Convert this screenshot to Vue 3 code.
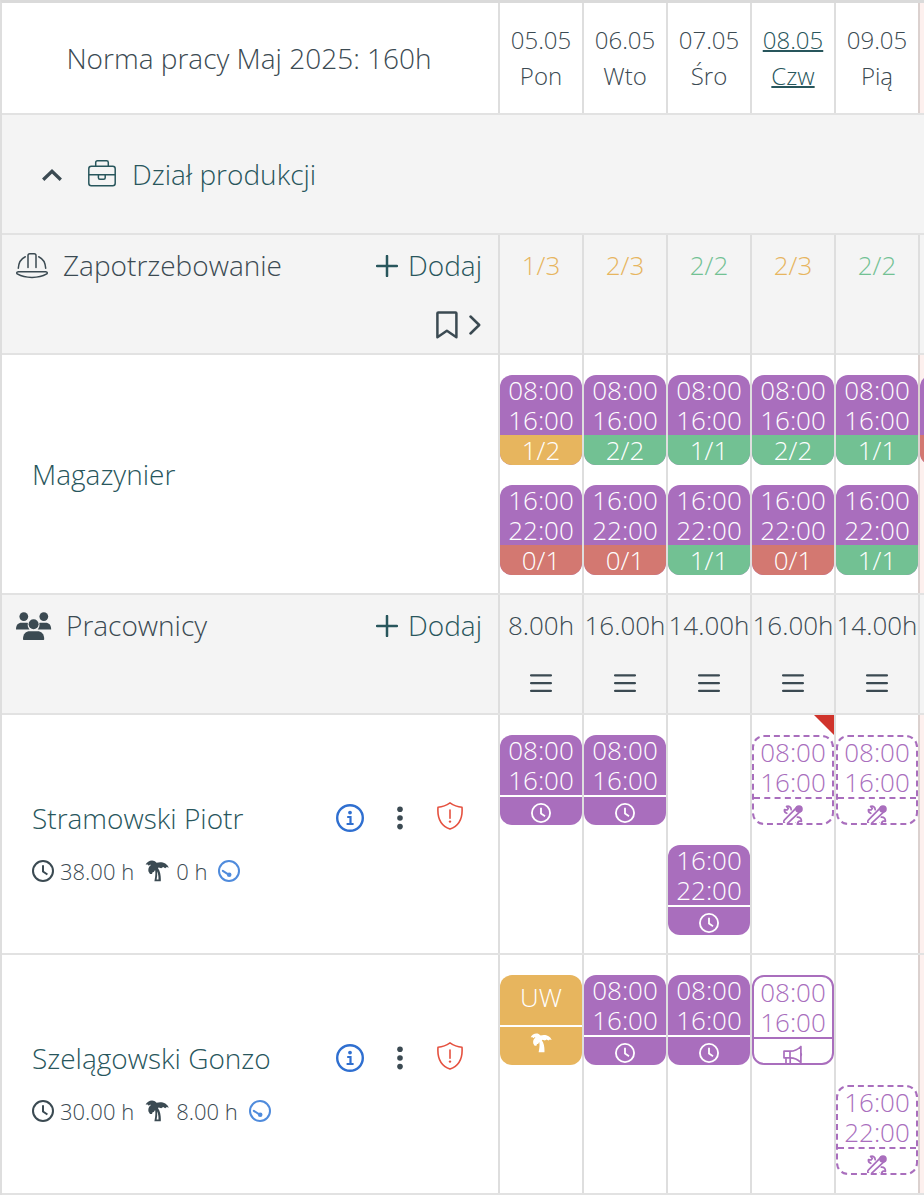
<template>
  <div class="schedule">
    <svg class="sprite" aria-hidden="true">
      <symbol id="i-clock" viewBox="0 0 22 22">
        <circle cx="11" cy="11" r="10" fill="none" stroke="currentColor" stroke-width="2" />
        <path d="M11 5.2v6.3l4.4 3" fill="none" stroke="currentColor" stroke-width="2" />
      </symbol>
      <symbol id="i-palm" viewBox="0 0 24 22">
        <path
          d="M.6 4.600C2.400 1 8-1.600 11.600 2.800c4-1.600 10.400-.4 12.200 5l-2-.7-1.600 1.100-2-1.100-2 1.200-2.400-.9-.9.500c2.600 3.500 3.100 8.200 2.900 13.300H9.400c.9-4.600 1.300-8.200.7-11.200L8.800 12l-1.200.2-.6 1.900-2-.1-1.400-2.200c-.8-2.800.2-5.400 2.200-6.600L5.200 4.400 3.900 5.800 2.600 4.600z"
          fill="currentColor"
        />
        <path class="palm-trunk" d="M12.100 11.200c1.200 2.600 1.500 5.200 1.400 8.300h-1.900c.6-2.800.8-5.500.5-8.300z" />
      </symbol>
      <symbol id="i-gauge" viewBox="0 0 22 22">
        <circle cx="11" cy="11" r="10" fill="none" stroke="currentColor" stroke-width="2" />
        <path d="M4.800 10.800L11 14.800" fill="none" stroke="currentColor" stroke-width="2" stroke-linecap="round" />
        <circle cx="11.200" cy="14.800" r="2.300" fill="currentColor" />
      </symbol>
      <symbol id="i-tools" viewBox="0 0 20 20">
        <g fill="none" stroke="currentColor" stroke-width="1.700" stroke-linecap="round" stroke-linejoin="round">
          <path d="M3.600 1.500c2.200-.9 4.600.6 4.600 3.200M3.600 1.500l1.700 2-1.200 1.500-2.600-.4c-.3 1.700.7 3.200 2.300 3.700" />
          <path d="M14.300 12.200c2.600-.3 4.400 1.500 4.100 4.200l-2.300-.4-1.300 1.400 1.600 2c-1.500.5-3 .1-3.900-1" />
          <path d="M13.800 2.300L1.300 15.200c-1.700 1.900.9 5 3.200 3.200L17.600 6.200" />
        </g>
        <circle cx="16" cy="4" r="3.800" fill="currentColor" />
      </symbol>
      <symbol id="i-horn" viewBox="0 0 20 20">
        <g fill="none" stroke="currentColor" stroke-width="1.700" stroke-linejoin="round">
          <path d="M1 6.200h6.200c4 0 7.700-1.700 10.700-4.700v16c-3-3-6.700-4.700-10.700-4.700H1z" />
          <path d="M7 6.200v6.600M3 12.800V20h4.200v-7" />
        </g>
        <path d="M17.600 7.500c2 .6 2 3.600 0 4.200z" fill="currentColor" />
      </symbol>
    </svg>

    <div class="row row-dates">
      <div class="lead lead-norm">Norma pracy Maj 2025: 160h</div>
      <div v-for="d in days" :key="d.date" class="cell cell-date">
        <span :class="{ today: d.today }">{{ d.date }}</span>
        <span :class="{ today: d.today }">{{ d.name }}</span>
      </div>
      <div class="weekend"></div>
    </div>

    <div class="department">
      <svg class="caret" width="20" height="12" viewBox="0 0 20 12">
        <path d="M1.200 10.800L10 2.400l8.800 8.400" fill="none" stroke="currentColor" stroke-width="3.300" />
      </svg>
      <svg class="briefcase" width="28" height="28" viewBox="0 0 28 28">
        <g fill="none" stroke="currentColor" stroke-width="1.500">
          <rect x=".8" y="6.300" width="26.400" height="19.400" rx="2.500" />
          <path d="M7.700 6V2.500c0-1 .7-1.700 1.700-1.700h9.200c1 0 1.700.7 1.700 1.700V6M.8 14.800h26.400M10.400 14.800v2.900c0 .9.600 1.500 1.500 1.500h3.800c.9 0 1.500-.6 1.500-1.500v-2.900" />
        </g>
      </svg>
      <span>Dział produkcji</span>
    </div>

    <div class="row row-head">
      <div class="lead lead-head">
        <div class="head-line">
          <svg class="helmet" width="32" height="26" viewBox="0 0 32 26">
            <g fill="none" stroke="currentColor" stroke-width="1.500" stroke-linecap="round" stroke-linejoin="round">
              <path d="M12 14.500V2.600C12 1.500 12.700.8 13.800.8h4.400c1.100 0 1.800.7 1.800 1.800v11.900" />
              <path d="M9.300 3.800C5 5.700 2.700 10 2.300 15.300M22.700 3.800c4.300 1.900 6.600 6.200 7 11.500" />
              <path d="M2.300 18.700h27.400c1.900 0 2 1.800.6 2.500-7.200 4.300-21.400 4.300-28.600 0-1.400-.7-1.300-2.500.6-2.500z" />
            </g>
          </svg>
          <span class="head-title">Zapotrzebowanie</span>
          <button class="add">
            <svg width="22" height="22" viewBox="0 0 22 22"><path d="M11 1v20M1 11h20" /></svg>
            Dodaj
          </button>
        </div>
        <div class="head-tools">
          <svg width="22" height="28" viewBox="0 0 22 28">
            <path d="M1.400 26.300V2.300c0-.5.400-.9.900-.9h17.200c.5 0 .9.400.9.900v24l-9.500-6.500z" fill="none" stroke="currentColor" stroke-width="2.500" stroke-linejoin="round" />
          </svg>
          <svg width="12" height="20" viewBox="0 0 12 20">
            <path d="M1.500 1.500L10.200 10l-8.700 8.500" fill="none" stroke="currentColor" stroke-width="2.500" stroke-linecap="round" stroke-linejoin="round" />
          </svg>
        </div>
      </div>
      <div v-for="(n, i) in needs" :key="i" class="cell cell-sum" :class="n.state">{{ n.text }}</div>
      <div></div>
    </div>

    <div class="row row-body">
      <div class="lead lead-role">Magazynier</div>
      <div v-for="(col, i) in demand" :key="i" class="cell cell-shifts">
        <div v-for="s in col" :key="s.from" class="shift">
          <div class="time">{{ s.from }}</div>
          <div class="time">{{ s.to }}</div>
          <div class="count" :class="s.state">{{ s.count }}</div>
        </div>
      </div>
      <div class="weekend cell-shifts">
        <div class="shift">
          <div class="time"></div>
          <div class="time"></div>
          <div class="count bad"></div>
        </div>
      </div>
    </div>

    <div class="row row-head">
      <div class="lead lead-head">
        <div class="head-line">
          <svg class="group" width="36" height="28" viewBox="0 0 36 28">
            <g fill="currentColor">
              <circle cx="7.800" cy="4.600" r="4.400" />
              <circle cx="27.800" cy="4.600" r="4.400" />
              <circle cx="17.600" cy="12.300" r="5" />
              <path d="M0 17.400c0-4.600 2.300-6.600 5.400-6.600h5.200c.5 0 .9.100 1.300.200-.6 2.500.1 4.800 1.600 6.400zM35.200 17.400c0-4.600-2.300-6.600-5.400-6.600h-5.200c-.5 0-.9.100-1.300.200.600 2.500-.1 4.800-1.600 6.400z" />
              <path d="M7 27c0-5.200 2.900-7.800 6.900-7.800h7.400c4 0 6.900 2.600 6.900 7.800 0 .6-.4 1-1 1H8c-.6 0-1-.4-1-1z" />
            </g>
          </svg>
          <span class="head-title people">Pracownicy</span>
          <button class="add">
            <svg width="22" height="22" viewBox="0 0 22 22"><path d="M11 1v20M1 11h20" /></svg>
            Dodaj
          </button>
        </div>
      </div>
      <div v-for="(h, i) in hours" :key="i" class="cell cell-hours">
        <span>{{ h }}</span>
        <svg width="22" height="20" viewBox="0 0 22 20">
          <path d="M1.100 2.300h19.800M1.100 10.100h19.800M1.100 17.900h19.800" fill="none" stroke="currentColor" stroke-width="2.300" stroke-linecap="round" />
        </svg>
      </div>
      <div></div>
    </div>

    <div v-for="w in workers" :key="w.name" class="row row-body">
      <div class="lead lead-worker">
        <div class="worker-line">
          <span class="worker-name">{{ w.name }}</span>
          <svg class="info" width="28" height="28" viewBox="0 0 28 28">
            <circle cx="14" cy="14" r="12.800" fill="none" stroke="currentColor" stroke-width="2.400" />
            <circle cx="14" cy="8.600" r="1.900" fill="currentColor" />
            <path d="M11.200 13h3.300v7M10.600 20h7" fill="none" stroke="currentColor" stroke-width="2.200" />
          </svg>
          <svg class="dots" width="6" height="28" viewBox="0 0 6 28">
            <g fill="currentColor">
              <circle cx="3" cy="5.200" r="2.800" />
              <circle cx="3" cy="14" r="2.800" />
              <circle cx="3" cy="22.600" r="2.800" />
            </g>
          </svg>
          <svg class="shield" width="28" height="28" viewBox="0 0 28 28">
            <path d="M14 .9c3.800 2.700 7.600 4 12 4.300.8 10.300-2.600 18.500-12 21.900C4.600 23.700 1.200 15.500 2 5.200 6.400 4.900 10.200 3.600 14 .9z" fill="none" stroke="currentColor" stroke-width="1.600" stroke-linejoin="round" />
            <path d="M14 8v8.300" stroke="currentColor" stroke-width="1.600" stroke-linecap="round" />
            <circle cx="14" cy="19.600" r="1.200" fill="currentColor" />
          </svg>
        </div>
        <div class="stats">
          <svg width="22" height="22"><use href="#i-clock" /></svg>
          <span>{{ w.worked }} h</span>
          <svg class="palm" width="24" height="22"><use href="#i-palm" /></svg>
          <span>{{ w.leave }} h</span>
          <svg class="gauge" width="22" height="22"><use href="#i-gauge" /></svg>
        </div>
      </div>
      <div v-for="(s, i) in w.shifts" :key="i" class="cell cell-shifts">
        <i v-if="s.flag" class="flag"></i>
        <div class="shift" :class="[s.kind, { second: s.second }]">
          <template v-if="s.kind === 'leave'">
            <div class="code">UW</div>
            <div class="foot"><svg width="22" height="20"><use href="#i-palm" /></svg></div>
          </template>
          <template v-else>
            <div class="time">{{ s.second ? "16:00" : "08:00" }}</div>
            <div class="time">{{ s.second ? "22:00" : "16:00" }}</div>
            <div class="foot"><svg width="20" height="20"><use :href="icons[s.kind]" /></svg></div>
          </template>
        </div>
      </div>
      <div class="weekend"></div>
    </div>
  </div>
</template>

<script setup>
const days = [
  { date: "05.05", name: "Pon" },
  { date: "06.05", name: "Wto" },
  { date: "07.05", name: "Śro" },
  { date: "08.05", name: "Czw", today: true },
  { date: "09.05", name: "Pią" },
];

const needs = [
  { text: "1/3", state: "is-warn" },
  { text: "2/3", state: "is-warn" },
  { text: "2/2", state: "is-ok" },
  { text: "2/3", state: "is-warn" },
  { text: "2/2", state: "is-ok" },
];

const morning = (count, state) => ({ from: "08:00", to: "16:00", count, state });
const evening = (count, state) => ({ from: "16:00", to: "22:00", count, state });

const demand = [
  [morning("1/2", "warn"), evening("0/1", "bad")],
  [morning("2/2", "ok"), evening("0/1", "bad")],
  [morning("1/1", "ok"), evening("1/1", "ok")],
  [morning("2/2", "ok"), evening("0/1", "bad")],
  [morning("1/1", "ok"), evening("1/1", "ok")],
];

const hours = ["8.00h", "16.00h", "14.00h", "16.00h", "14.00h"];

const icons = {
  work: "#i-clock",
  draft: "#i-tools",
  offer: "#i-horn",
};

const workers = [
  {
    name: "Stramowski Piotr",
    worked: "38.00",
    leave: "0",
    shifts: [
      { kind: "work" },
      { kind: "work" },
      { kind: "work", second: true },
      { kind: "draft", flag: true },
      { kind: "draft" },
    ],
  },
  {
    name: "Szelągowski Gonzo",
    worked: "30.00",
    leave: "8.00",
    shifts: [
      { kind: "leave" },
      { kind: "work" },
      { kind: "work" },
      { kind: "offer" },
      { kind: "draft", second: true },
    ],
  },
];
</script>

<style>
body {
  overflow: hidden;
  background: #fff;
}
</style>

<style scoped>
.schedule {
  width: 924px;
  height: 1195px;
  box-sizing: border-box;
  overflow: hidden;
  border-top: 3px solid #dadada;
  border-left: 2px solid #dedede;
  font-family: "Open Sans", sans-serif;
  font-weight: 300;
  color: #3b4a52;
}
.schedule * {
  box-sizing: border-box;
}
.sprite {
  position: absolute;
  width: 0;
  height: 0;
}
svg {
  display: block;
  flex-shrink: 0;
}

.row {
  display: grid;
  grid-template-columns: 498px repeat(5, 84px) 4px;
  border-bottom: 2px solid #e2e2e2;
}
.row-dates {
  height: 112px;
}
.row-head {
  height: 120px;
  background: #f4f4f4;
}
.row-body {
  height: 240px;
}
.lead,
.cell {
  border-right: 2px solid #dedede;
}
.cell:nth-child(6) {
  border-right-color: #dbd1cf;
}
.row-head .cell:nth-child(6) {
  border-right-color: #dedede;
}
.weekend {
  background: #fdf0ee;
  overflow: hidden;
}

.lead-norm {
  display: flex;
  align-items: center;
  justify-content: center;
  padding-right: 2px;
  font-size: 28px;
}
.cell-date {
  display: flex;
  flex-direction: column;
  align-items: center;
  justify-content: center;
  font-size: 24px;
  line-height: 36px;
}
.today {
  color: #28565c;
  text-decoration: underline;
  text-decoration-thickness: 2px;
}

.department {
  display: flex;
  align-items: center;
  height: 120px;
  padding-left: 40px;
  background: #f4f4f4;
  border-bottom: 2px solid #e2e2e2;
  font-size: 28px;
  color: #28565c;
}
.caret {
  margin: 2px 26px 0 0;
  color: #3b4a52;
}
.briefcase {
  margin-right: 16px;
}

.head-line {
  display: flex;
  align-items: center;
  height: 60px;
  padding: 0 16px 0 14px;
  font-size: 28px;
}
.helmet,
.group {
  margin-top: 2px;
}
.head-title {
  margin-left: 15px;
}
.people {
  margin-left: 14px;
}
.add {
  display: flex;
  align-items: center;
  gap: 10px;
  margin-left: auto;
  padding: 0;
  border: 0;
  background: none;
  font: inherit;
  color: #28565c;
}
.add svg {
  margin-top: 2px;
}
.add path {
  fill: none;
  stroke: currentColor;
  stroke-width: 2.5;
  stroke-linecap: round;
}
.head-tools {
  display: flex;
  align-items: center;
  justify-content: flex-end;
  gap: 11px;
  height: 60px;
  padding-right: 17px;
}
.cell-sum {
  font-size: 26px;
  line-height: 60px;
  text-align: center;
}
.is-warn {
  color: #e7b55e;
}
.is-ok {
  color: #72c193;
}
.cell-hours {
  display: flex;
  flex-direction: column;
  align-items: center;
  font-size: 26px;
  line-height: 60px;
}
.cell-hours svg {
  margin-top: 18px;
}

.lead-role {
  display: flex;
  align-items: center;
  padding-left: 30px;
  font-size: 28px;
  color: #28565c;
}

.cell-shifts {
  position: relative;
  display: flex;
  flex-direction: column;
  gap: 20px;
  padding-top: 20px;
}
.shift {
  width: 82px;
  height: 90px;
  flex-shrink: 0;
  overflow: hidden;
  border-radius: 12px;
  background: #a96ebd;
  color: #fff;
  font-size: 26px;
  text-align: center;
}
.second {
  margin-top: 110px;
}
.time,
.count {
  height: 30px;
  line-height: 30px;
}
.warn,
.leave {
  background: #e7b55e;
}
.ok {
  background: #72c193;
}
.bad {
  background: #d37871;
}
.foot {
  display: flex;
  justify-content: center;
  padding-top: 6px;
  border-top: 2px solid #fff;
}
.code {
  height: 50px;
  line-height: 44px;
}
.draft,
.offer {
  background: #fff;
  border: 2px solid #a96ebd;
  color: #a96ebd;
}
.draft {
  border-style: dashed;
}
.draft .foot,
.offer .foot {
  border-top: 2px solid #a96ebd;
}
.draft .foot {
  border-top-style: dashed;
}
.flag {
  position: absolute;
  top: 0;
  right: 0;
  width: 20px;
  height: 20px;
  background: #d0342c;
  clip-path: polygon(0 0, 100% 0, 100% 100%);
}

.lead-worker {
  padding: 73px 34px 0 30px;
}
.worker-line {
  display: flex;
  align-items: center;
  height: 60px;
}
.worker-name {
  margin-right: auto;
  font-size: 28px;
  color: #28565c;
}
.info {
  color: #2f6fd0;
}
.dots {
  margin: 0 33px;
}
.shield {
  margin-top: -4px;
  color: #e5513f;
}
.stats {
  display: flex;
  align-items: center;
  gap: 6px;
  height: 46px;
  font-size: 22px;
}
.palm {
  margin: 0 1px 0 5px;
}
.palm-trunk {
  fill: #fff;
}
.gauge {
  margin-left: 5px;
  color: #4f8bdc;
}
</style>
